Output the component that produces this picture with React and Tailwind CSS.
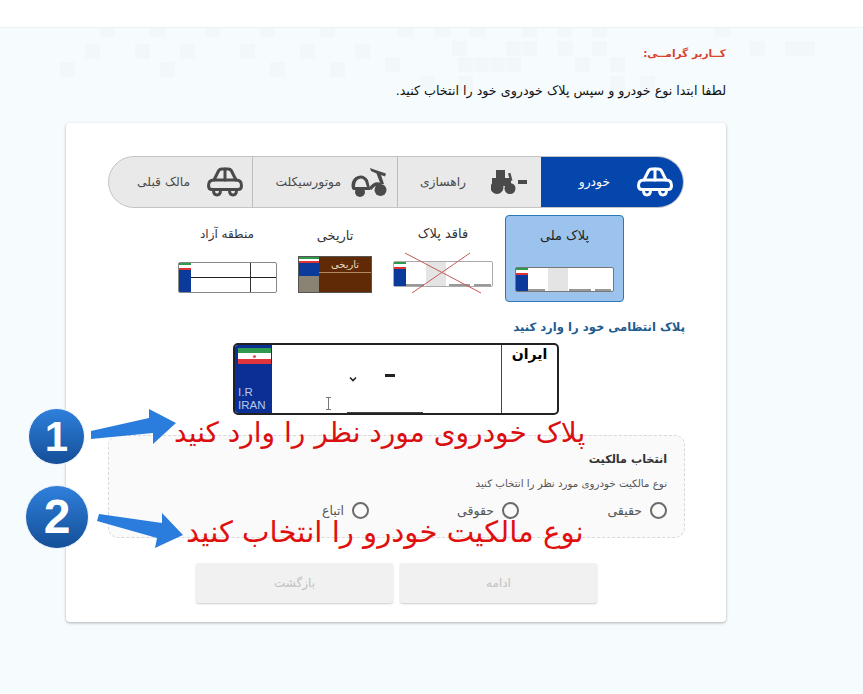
import React from "react";

const font = { fontFamily: '"DejaVu Sans", sans-serif' };

const squares = [
  [398, 28, 15, 9], [435, 28, 15, 9], [470, 28, 15, 9], [522, 28, 15, 9], [557, 28, 15, 9], [592, 28, 15, 9], [715, 28, 15, 9],
  [452, 41, 15, 15], [506, 41, 15, 15], [522, 41, 15, 15], [558, 41, 15, 15], [592, 41, 15, 15], [750, 41, 15, 15], [785, 41, 15, 15], [800, 41, 15, 15],
  [385, 57, 15, 15], [458, 57, 15, 15], [474, 57, 15, 15], [490, 57, 15, 15], [506, 57, 15, 15], [575, 57, 15, 15], [610, 57, 15, 15],
  [100, 28, 15, 9], [150, 28, 15, 9], [205, 28, 15, 9], [260, 28, 15, 9], [320, 28, 15, 9],
  [85, 44, 15, 15], [135, 44, 15, 15], [180, 44, 15, 15], [240, 44, 15, 15], [300, 44, 15, 15], [355, 44, 15, 15],
  [60, 62, 15, 15], [160, 62, 15, 15], [270, 62, 15, 15], [330, 62, 15, 15],
  [420, 76, 15, 15], [458, 76, 15, 15], [610, 76, 15, 15], [640, 76, 15, 15],
];

function Car({ className }) {
  return (
    <svg viewBox="0 0 36 30" className={className} fill="none" stroke="currentColor" strokeWidth="3" strokeLinejoin="round" strokeLinecap="round">
      <path d="M7 13 L11 5 Q12 2 15 2 H21 Q24 2 25 5 L29 13" />
      <path d="M18 2 V13" />
      <path d="M5 22.5 Q1.5 22.5 1.5 18.5 Q1.5 13 7 13 H29 Q34.5 13 34.5 18.5 Q34.5 22.5 31 22.5 Z" />
      <path d="M6.5 23 Q6.5 28 10 28 Q13.5 28 13.5 23" />
      <path d="M22.5 23 Q22.5 28 26 28 Q29.5 28 29.5 23" />
    </svg>
  );
}

function Tractor({ className }) {
  return (
    <svg viewBox="0 0 36 24" className={className} fill="currentColor">
      <rect x="5" y="0" width="9" height="9" />
      <rect x="1" y="8" width="19" height="8" />
      <circle cx="6" cy="17.5" r="6.5" />
      <circle cx="19" cy="18.5" r="5.5" />
      <rect x="18" y="3" width="2.5" height="8" transform="rotate(-15 19 7)" />
      <rect x="27" y="10" width="9" height="4" />
    </svg>
  );
}

function Moto({ className }) {
  return (
    <svg viewBox="0 0 36 29" className={className} fill="currentColor">
      <circle cx="9" cy="24" r="5" />
      <circle cx="29.5" cy="22" r="6" />
      <path fillRule="evenodd" d="M0.5 17 Q1 10 7 8 Q13 6 17 12 L19.5 22 H3 Q0.5 22 0.5 17 Z M4 19 H16 L14 13 Q11 9.5 8 11 Q4 12.5 4 19 Z" />
      <path d="M19 0 L23 1.5 L35 5.5 L34 8.5 L30 7 L33 16 L29.5 16 L25.5 5.5 L20 3 Z" />
      <path d="M18 20 Q23 12 30 15 L29 18 Q24 17 20.5 22 Z" />
    </svg>
  );
}

function Tab({ label, icon, active, className }) {
  return (
    <div className={`flex h-full items-center ${className} ${active ? "bg-[#0546ac] text-white" : "text-[#4a4a4a]"}`}>
      <span className="flex w-[36px] shrink-0 justify-center">{icon}</span>
      <span className="whitespace-nowrap text-[12.3px]">{label}</span>
    </div>
  );
}

function MiniFlag({ className }) {
  return (
    <div className={`flex shrink-0 flex-col bg-[#0b3a9a] ${className}`}>
      <div className="h-[2px] bg-[#2f9a4e]" />
      <div className="h-[3px] bg-white" />
      <div className="h-[2px] bg-[#d33]" />
    </div>
  );
}

function Radio({ label, className }) {
  return (
    <label className={`flex items-center gap-[8px] ${className}`}>
      <span className="h-[17px] w-[17px] shrink-0 rounded-full border-2 border-[#6b6b6b] bg-transparent" />
      <span className="text-[12.5px] leading-[17px] text-[#555]">{label}</span>
    </label>
  );
}

export default function App() {
  return (
    <div dir="rtl" style={font} className="relative h-[694px] w-[863px] overflow-hidden bg-[#f6fbfe]">
      <svg viewBox="0 0 863 694" className="absolute inset-0 h-[694px] w-[863px]">
        {squares.map(([x, y, w, h], i) => (
          <rect key={i} x={x} y={y} width={w} height={h} fill="#f2f8fa" />
        ))}
      </svg>

      <div className="relative h-[28px] border-b border-[#edf1f3] bg-white" />

      <div className="relative mr-[137px] w-[660px]">
        <p className="mt-[15px] text-[10.6px] font-bold leading-[20px] text-[#d8432f]">کــاربر گرامــی:</p>
        <p className="mt-[18px] text-[12.7px] leading-[20px] text-[#111]">لطفا ابتدا نوع خودرو و سپس پلاک خودروی خود را انتخاب کنید.</p>

        <div className="mt-[22px] h-[499px] rounded-[4px] bg-white pr-[42px] pt-[33px] shadow-[0_1px_3px_rgba(0,0,0,0.3)]">
          <div className="flex h-[52px] w-[576px] overflow-hidden rounded-[26px] border border-[#c4c4c4] bg-[#e9e9e9]">
            <Tab active className="w-[142px] gap-[27px] pr-[10px]" label="خودرو" icon={<Car className="h-[30px] w-[36px]" />} />
            <Tab className="w-[144px] gap-[25px] border-l border-[#bdbdbd] pr-[14px]" label="راهسازی" icon={<Tractor className="h-[24px] w-[36px]" />} />
            <Tab className="w-[145px] gap-[10px] border-l border-[#bdbdbd] pr-[10px]" label="موتورسیکلت" icon={<Moto className="h-[29px] w-[36px]" />} />
            <Tab className="w-[143px] gap-[17px] pr-[9px]" label="مالک قبلی" icon={<Car className="h-[30px] w-[36px]" />} />
          </div>

          <div className="mr-[60px] mt-[7px] flex items-start">
            <div className="flex h-[87px] w-[119px] flex-col items-center rounded-[4px] border border-[#2a78b8] bg-[#9cc3ee] pt-[12px]">
              <span className="text-[13px] leading-[16px] text-[#222]">پلاک ملی</span>
              <div dir="ltr" className="relative mt-[23px] flex h-[25px] w-[99px] overflow-hidden rounded-[2px] border border-[#777] bg-white">
                <MiniFlag className="w-[12px]" />
                <div className="ml-[20px] h-full w-[20px] bg-[#e4e4e4]" />
                <svg viewBox="0 0 97 23" className="absolute inset-0 h-full w-full">
                  <path d="M12 22H29M53 22H75M79 22H95" stroke="#999" strokeWidth="2" />
                </svg>
              </div>
            </div>

            <div className="mr-[8px] flex w-[108px] flex-col items-center pt-[11px]">
              <span className="text-[13px] leading-[16px] text-[#333]">فاقد پلاک</span>
              <div dir="ltr" className="relative mt-[19px] flex h-[26px] w-[100px] rounded-[2px] border border-[#aaa] bg-white">
                <MiniFlag className="w-[12px]" />
                <div className="ml-[20px] h-full w-[20px] bg-[#e4e4e4]" />
                <svg viewBox="0 0 98 24" className="absolute inset-0 h-full w-full overflow-visible">
                  <path d="M12 23H30M55 23H76M80 23H97" stroke="#333" strokeWidth="1" />
                  <path d="M11 -9 L87 31 M76 -9 L18 31" stroke="#c65a5a" strokeWidth="1" />
                </svg>
              </div>
            </div>

            <div className="flex w-[108px] flex-col items-center pt-[13px]">
              <span className="text-[13px] leading-[16px] text-[#333]">تاریخی</span>
              <div dir="ltr" className="mt-[12px] flex h-[37px] w-[74px] border border-[#555] bg-[#5f2a05]">
                <div className="flex w-[20px] shrink-0 flex-col justify-between bg-[#0b3a9a]">
                  <div>
                    <div className="h-[2px] bg-[#2f9a4e]" />
                    <div className="h-[2px] bg-white" />
                    <div className="h-[2px] bg-[#d33]" />
                  </div>
                  <div className="h-[16px] bg-[#8a8272]" />
                </div>
                <div className="flex-1">
                  <div className="h-[16px] border-b border-[#b08a5a] text-center text-[10px] leading-[15px] text-[#eadcc4]">تاریخی</div>
                </div>
              </div>
            </div>

            <div className="flex w-[108px] flex-col items-center pt-[11px]">
              <span className="text-[12px] leading-[16px] text-[#333]">منطقه آزاد</span>
              <div dir="ltr" className="mt-[20px] flex h-[31px] w-[99px] overflow-hidden rounded-[2px] border border-[#888] bg-white">
                <MiniFlag className="w-[12px]" />
                <div className="flex h-full flex-1 flex-col">
                  <div className="flex h-[15px] border-b border-[#222]">
                    <div className="w-[60px] border-r border-[#333]" />
                  </div>
                  <div className="flex flex-1">
                    <div className="w-[60px] border-r border-[#333]" />
                  </div>
                </div>
              </div>
            </div>
          </div>

          <p className="-mr-[1px] mt-[15px] text-[11.6px] font-bold leading-[20px] text-[#1f5c8e]">پلاک انتظامی خود را وارد کنید</p>

          <div dir="ltr" className="mr-[125px] mt-[6px] flex h-[72px] w-[326px] overflow-hidden rounded-[5px] border-2 border-[#222] bg-white">
            <div className="flex w-[37px] shrink-0 flex-col justify-between bg-[#0b2f94] pb-[1px] pl-[3px] pt-[3px]">
              <div className="flex h-[16px] w-[33px] flex-col">
                <div className="h-[5px] bg-[#2f9a4e]" />
                <div className="flex h-[6px] items-center justify-center bg-white">
                  <span className="h-[3px] w-[3px] rounded-full bg-[#d9534f]" />
                </div>
                <div className="h-[5px] bg-[#e0353a]" />
              </div>
              <div className="font-['Liberation_Sans'] text-[11.5px] leading-[13px] text-[#b5c9ee]">I.R<br />IRAN</div>
            </div>
            <div className="relative flex-1">
              <svg viewBox="0 0 8 6" className="absolute left-[77px] top-[31px] h-[6px] w-[8px]">
                <path d="M1 1.5 L4 4.5 L7 1.5" fill="none" stroke="#222" strokeWidth="1.6" />
              </svg>
              <span className="absolute left-[113px] top-[29px] h-[3px] w-[10px] bg-[#222]" />
              <span className="absolute bottom-0 left-[75px] h-[1px] w-[76px] bg-[#444]" />
            </div>
            <div dir="rtl" className="w-[56px] shrink-0 border-l border-[#444] text-center text-[14px] font-bold leading-[18px] text-black">ایران</div>
          </div>

          <div className="-mr-[1px] mt-[20px] h-[103px] w-[577px] rounded-[10px] border border-dashed border-[#d8d8d8] bg-[#fafafa] pr-[17px] pt-[15px]">
            <p className="text-[11.2px] font-bold leading-[18px] text-[#333]">انتخاب مالکیت</p>
            <p className="mt-[6px] text-[10.25px] leading-[16px] text-[#555]">نوع مالکیت خودروی مورد نظر را انتخاب کنید</p>
            <div className="mt-[11px] flex">
              <Radio label="حقیقی" className="w-[148px]" />
              <Radio label="حقوقی" className="w-[150px]" />
              <Radio label="اتباع" />
            </div>
          </div>

          <div className="mr-[87px] mt-[25px] flex gap-[7px]">
            <div className="flex h-[40px] w-[197px] items-center justify-center rounded-[3px] bg-[#f1f1f1] text-[12px] text-[#c2c2c2] shadow-[0_1px_2px_rgba(0,0,0,0.2)]">ادامه</div>
            <div className="flex h-[40px] w-[197px] items-center justify-center rounded-[3px] bg-[#f1f1f1] text-[12px] text-[#c2c2c2] shadow-[0_1px_2px_rgba(0,0,0,0.2)]">بازگشت</div>
          </div>
        </div>
      </div>

      {/* Annotations drawn over the page */}
      <span className="absolute left-[174px] top-[411px] whitespace-nowrap text-[28px] leading-[44px] text-[#d9100f]">پلاک خودروی مورد نظر را وارد کنید</span>
      <span className="absolute left-[186px] top-[510px] whitespace-nowrap text-[29.2px] leading-[44px] text-[#e0100f]">نوع مالکیت خودرو را انتخاب کنید</span>

      <div className="absolute left-[28px] top-[408px] flex h-[57px] w-[57px] items-center justify-center rounded-full border border-[#e8f0f8] bg-gradient-to-b from-[#2f80dc] to-[#154f98] font-['Liberation_Sans'] text-[42px] font-bold text-white">1</div>
      <div className="absolute left-[25px] top-[485px] flex h-[64px] w-[64px] items-center justify-center rounded-full border border-[#e8f0f8] bg-gradient-to-b from-[#2f80dc] to-[#154f98] font-['Liberation_Sans'] text-[48px] font-bold text-white">2</div>

      <svg viewBox="0 0 863 694" className="pointer-events-none absolute inset-0 h-[694px] w-[863px]">
        <polygon points="91,431 149,418 149,409 176,423 153,444 153,433 91,439" fill="#2b7ddd" />
        <polygon points="99,514 162,523 162,513 183,535 155,548 157,538 97,521" fill="#2b7ddd" />
        <path d="M326 397.5H331M328.5 397.5V409.5M326 409.5H331" fill="none" stroke="#777" strokeWidth="1" />
      </svg>
    </div>
  );
}
